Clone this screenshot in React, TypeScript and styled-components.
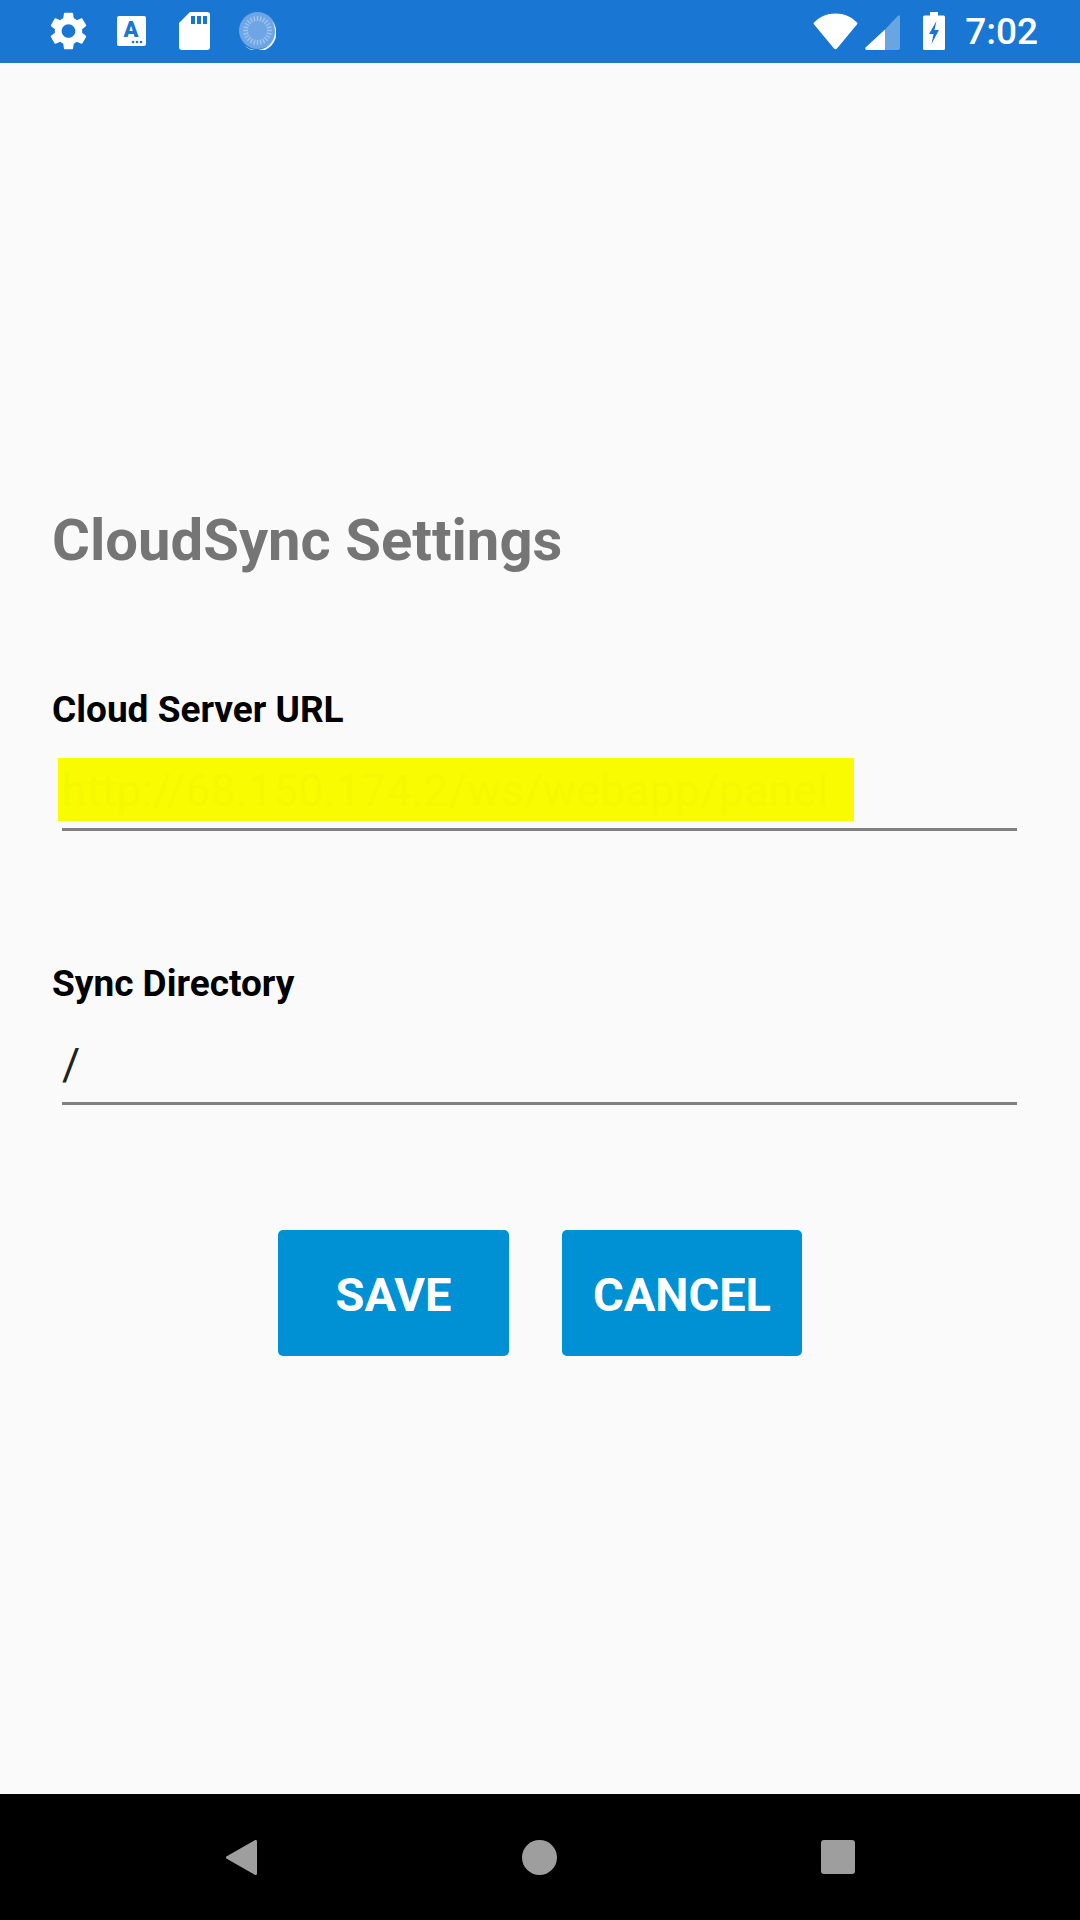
import styled, { createGlobalStyle } from "styled-components"

const GlobalStyle = createGlobalStyle`
    html, body {
        margin: 0;
        padding: 0;
        background: #fafafa;
    }
    * {
        box-sizing: border-box;
    }
`

const Screen = styled.div`
    display: flex;
    flex-direction: column;
    width: 1080px;
    height: 1920px;
    overflow: hidden;
    font-family: Roboto, "Noto Sans", sans-serif;
    background: #fafafa;
`

const StatusBar = styled.div`
    display: flex;
    align-items: flex-start;
    justify-content: space-between;
    flex: 0 0 63px;
    padding: 12px 42px 0 50px;
    background: #1976d2;
`

const IconGroup = styled.div`
    display: flex;
    align-items: flex-start;
`

const StatusIcon = styled.svg<{ $left?: number; $top?: number }>`
    display: block;
    flex: none;
    margin-left: ${(p) => p.$left ?? 0}px;
    margin-top: ${(p) => p.$top ?? 0}px;
`

const Clock = styled.span`
    margin-left: 20px;
    font-size: 37px;
    line-height: 40px;
    font-weight: 500;
    color: #fff;
`

const Main = styled.main`
    flex: 1;
    padding: 443px 0 0 52px;
`

const Title = styled.h1`
    margin: 0;
    font-size: 58px;
    line-height: 68px;
    font-weight: 700;
    color: #757575;
`

const Field = styled.section<{ $top: number }>`
    margin-top: ${(p) => p.$top}px;
`

const Label = styled.label`
    display: block;
    font-size: 37px;
    line-height: 44px;
    font-weight: 700;
    color: #000;
`

const InputBox = styled.div`
    width: 963px;
    margin: 26px 0 0 6px;
`

const Value = styled.div`
    height: 63px;
    padding-left: 4px;
    font-size: 44px;
    line-height: 67px;
    font-weight: 400;
    color: #212121;
`

const MaskedValue = styled(Value)`
    width: 796px;
    overflow: hidden;
    white-space: nowrap;
    letter-spacing: 0.5px;
    background: #f9fc00;
    color: #f5f800;
`

const Underline = styled.div`
    height: 3px;
    margin: 7px 4px 0;
    background: #808080;
`

const ButtonRow = styled.div`
    display: flex;
    justify-content: center;
    gap: 53px;
    margin: 125px 0 0 -52px;
`

const ActionButton = styled.button<{ $width: number }>`
    width: ${(p) => p.$width}px;
    height: 126px;
    padding: 2px 0 0;
    border: 0;
    border-radius: 5px;
    background: #0091d4;
    font-family: inherit;
    font-size: 47px;
    font-weight: 700;
    color: #fff;
`

const NavBar = styled.nav`
    display: flex;
    align-items: center;
    flex: 0 0 126px;
    padding: 0 0 0 226px;
    background: #000;
`

const NavIcon = styled.svg<{ $left?: number }>`
    display: block;
    margin-left: ${(p) => p.$left ?? 0}px;
`

const GearIcon = () => (
    <StatusIcon width="37" height="38" viewBox="2.5 2 19 20" fill="#fff">
        <path d="M19.14 12.94c.04-.3.06-.61.06-.94 0-.32-.02-.64-.07-.94l2.03-1.58a.49.49 0 0 0 .12-.61l-1.92-3.32a.488.488 0 0 0-.59-.22l-2.39.96c-.5-.38-1.03-.7-1.62-.94l-.36-2.54a.484.484 0 0 0-.48-.41h-3.84c-.24 0-.43.17-.47.41l-.36 2.54c-.59.24-1.13.57-1.62.94l-2.39-.96c-.22-.08-.47 0-.59.22L2.74 8.87c-.12.21-.08.47.12.61l2.03 1.58c-.05.3-.09.63-.09.94s.02.64.07.94l-2.03 1.58a.49.49 0 0 0-.12.61l1.92 3.32c.12.22.37.29.59.22l2.39-.96c.5.38 1.03.7 1.62.94l.36 2.54c.05.24.24.41.48.41h3.84c.24 0 .44-.17.47-.41l.36-2.54c.59-.24 1.13-.56 1.62-.94l2.39.96c.22.08.47 0 .59-.22l1.92-3.32c.12-.22.07-.47-.12-.61l-2.01-1.58zM12 15.6c-1.98 0-3.6-1.62-3.6-3.6s1.62-3.6 3.6-3.6 3.6 1.62 3.6 3.6-1.62 3.6-3.6 3.6z" />
    </StatusIcon>
)

const FontAppIcon = () => (
    <StatusIcon $left={30} $top={4} width="29" height="30" viewBox="0 0 29 30">
        <rect width="29" height="30" rx="2" fill="#fff" />
        <text x="14" y="21" textAnchor="middle" fontFamily="Roboto" fontWeight="900" fontSize="22" fill="#1976d2">A</text>
        <circle cx="16" cy="26" r="1.3" fill="#1976d2" />
        <circle cx="20" cy="26" r="1.3" fill="#1976d2" />
        <circle cx="24" cy="26" r="1.3" fill="#1976d2" />
    </StatusIcon>
)

const SdCardIcon = () => (
    <StatusIcon $left={33} width="31" height="38" viewBox="0 0 31 38">
        <path d="M11 0h17a3 3 0 0 1 3 3v32a3 3 0 0 1-3 3H3a3 3 0 0 1-3-3V11z" fill="#fff" />
        <rect x="12" y="4" width="4" height="8" fill="#1976d2" />
        <rect x="18" y="4" width="4" height="8" fill="#1976d2" />
        <rect x="24" y="4" width="4" height="8" fill="#1976d2" />
    </StatusIcon>
)

const spinnerTicks = Array.from({ length: 24 }, (_, i) => i * 15)

const SpinnerIcon = () => (
    <StatusIcon $left={29} width="37" height="38" viewBox="0 0 37 38">
        <circle cx="18.500" cy="18.500" r="18.500" fill="#6ea6e5" />
        <path d="M32 8a18.500 18.500 0 0 1-26 26 17 17 0 0 0 26-26z" fill="#fff" fillOpacity="0.9" />
        {spinnerTicks.map((deg) => (
            <rect
                key={deg}
                x="17.800"
                y="4"
                width="1.400"
                height="5"
                fill="#fff"
                fillOpacity="0.35"
                transform={`rotate(${deg} 18.500 18.500)`}
            />
        ))}
    </StatusIcon>
)

const WifiIcon = () => (
    <StatusIcon $top={1} width="45" height="37" viewBox="0 0 45 37">
        <path d="M1 9.500C7 3.500 14 .5 22.500.5S38 3.500 44 9.500c.6.6.6 1.200.1 1.700L24 35.600c-.8 1-2.200 1-3 0L.9 11.200c-.5-.5-.5-1.100.1-1.700z" fill="#fff" />
    </StatusIcon>
)

const SignalIcon = () => (
    <StatusIcon $left={7} $top={3} width="35" height="35" viewBox="0 0 35 35">
        <path d="M20 14.500 33 .8c1-1 2-.6 2 .7V33a2 2 0 0 1-2 2H20z" fill="#fff" fillOpacity="0.35" />
        <path d="M20 14.500V35H2c-1.600 0-2.300-1.700-1.200-2.800z" fill="#fff" />
    </StatusIcon>
)

const BatteryIcon = () => (
    <StatusIcon $left={23} width="22" height="38" viewBox="0 0 22 38">
        <path d="M7 0h8v3.500h5.500a1.500 1.500 0 0 1 1.500 1.500v31.500a1.500 1.500 0 0 1-1.500 1.500H1.500A1.500 1.500 0 0 1 0 36.500V5a1.500 1.500 0 0 1 1.500-1.500H7z" fill="#fff" />
        <path d="M13.500 9 6 22h4.500l-2 10L16 18h-4.500z" fill="#1976d2" />
    </StatusIcon>
)

const BackIcon = () => (
    <NavIcon width="31" height="35" viewBox="0 0 31 35">
        <path d="M1.500 17.500 29.500 1.500V33.500z" fill="#9e9e9e" stroke="#9e9e9e" strokeWidth="3" strokeLinejoin="round" />
    </NavIcon>
)

const HomeIcon = () => (
    <NavIcon $left={265} width="35" height="35" viewBox="0 0 35 35">
        <circle cx="17.500" cy="17.500" r="17.500" fill="#9e9e9e" />
    </NavIcon>
)

const RecentsIcon = () => (
    <NavIcon $left={264} width="34" height="34" viewBox="0 0 34 34">
        <rect width="34" height="34" rx="3" fill="#9e9e9e" />
    </NavIcon>
)

const App = () => {
    return (
        <Screen>
            <GlobalStyle />
            <StatusBar>
                <IconGroup>
                    <GearIcon />
                    <FontAppIcon />
                    <SdCardIcon />
                    <SpinnerIcon />
                </IconGroup>
                <IconGroup>
                    <WifiIcon />
                    <SignalIcon />
                    <BatteryIcon />
                    <Clock>7:02</Clock>
                </IconGroup>
            </StatusBar>
            <Main>
                <Title>CloudSync Settings</Title>
                <Field $top={114}>
                    <Label>Cloud Server URL</Label>
                    <InputBox>
                        <MaskedValue>http://68.150.174.2/ws/webapp/panel</MaskedValue>
                        <Underline />
                    </InputBox>
                </Field>
                <Field $top={131}>
                    <Label>Sync Directory</Label>
                    <InputBox>
                        <Value>/</Value>
                        <Underline />
                    </InputBox>
                </Field>
                <ButtonRow>
                    <ActionButton $width={231}>SAVE</ActionButton>
                    <ActionButton $width={240}>CANCEL</ActionButton>
                </ButtonRow>
            </Main>
            <NavBar>
                <BackIcon />
                <HomeIcon />
                <RecentsIcon />
            </NavBar>
        </Screen>
    )
}

export default App
